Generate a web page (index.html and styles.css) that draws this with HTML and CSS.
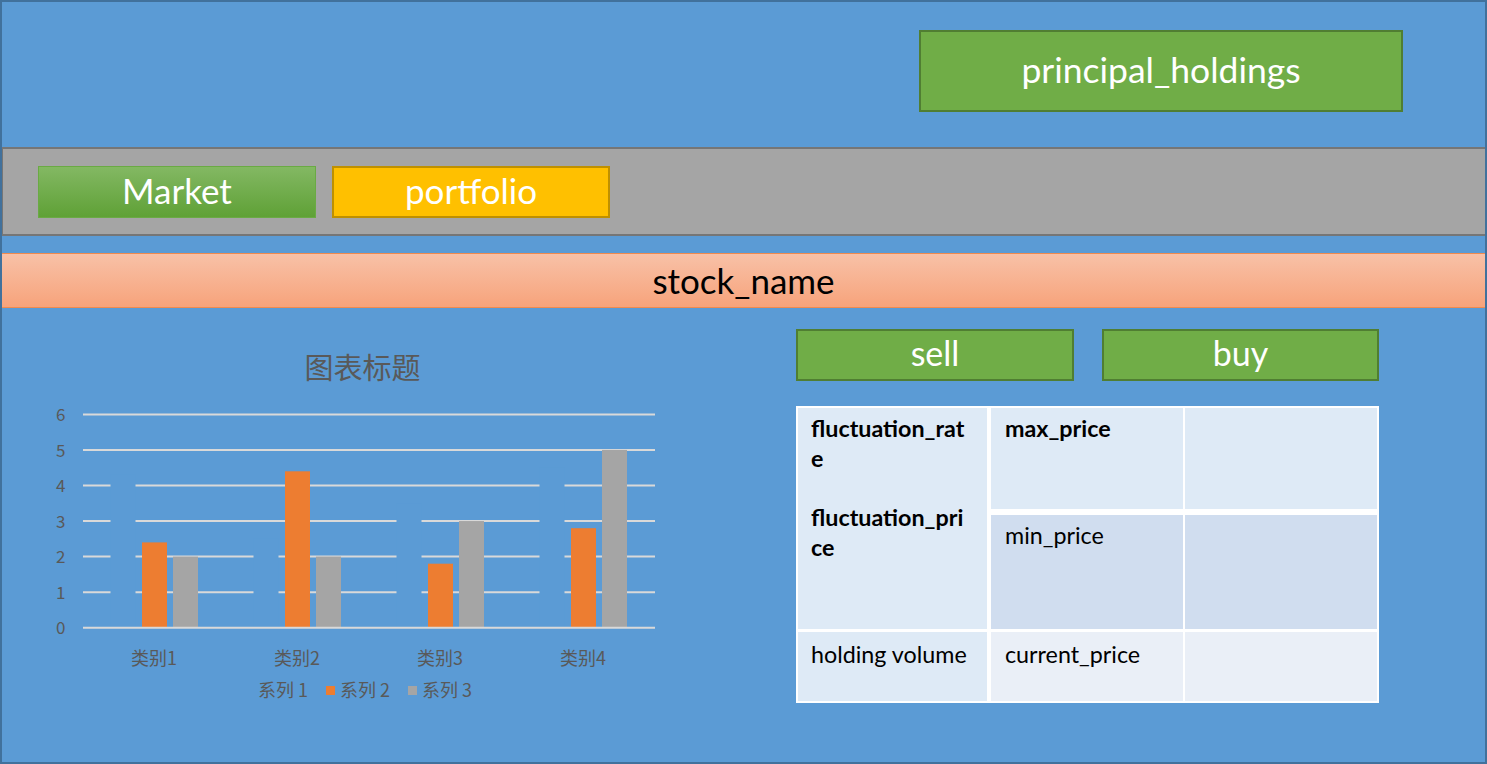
FILE: index.html
```html
<!DOCTYPE html>
<html lang="en">
<head>
<meta charset="utf-8">
<title>Stock</title>
<link rel="stylesheet" href="styles.css">
</head>
<body>
<div class="frame">
  <header class="header">
    <div class="btn btn-principal">principal_holdings</div>
  </header>
  <nav class="nav">
    <div class="btn btn-market">Market</div>
    <div class="btn btn-portfolio">portfolio</div>
  </nav>
  <div class="stock-bar">stock_name</div>
  <main class="content">
    <svg class="chart" width="700" height="452" viewBox="2 308 700 452" xmlns="http://www.w3.org/2000/svg">
      <text class="chart-title" x="362.5" y="379" text-anchor="middle">图表标题</text>
      <g stroke="#D9D9D9" stroke-width="2">
        <line x1="83" x2="655" y1="592.15" y2="592.15"/>
        <line x1="83" x2="655" y1="556.6" y2="556.6"/>
        <line x1="83" x2="655" y1="521.05" y2="521.05"/>
        <line x1="83" x2="655" y1="485.5" y2="485.5"/>
        <line x1="83" x2="655" y1="449.95" y2="449.95"/>
        <line x1="83" x2="655" y1="414.4" y2="414.4"/>
      </g>
      <g fill="#5B9BD5">
        <rect x="110.5" y="474.8" width="25" height="152.9"/>
        <rect x="253.5" y="538.8" width="25" height="88.9"/>
        <rect x="396.5" y="503.3" width="25" height="124.4"/>
        <rect x="539.5" y="467.7" width="25" height="160"/>
      </g>
      <g fill="#ED7D31">
        <rect x="142" y="542.4" width="25" height="85.3"/>
        <rect x="285" y="471.3" width="25" height="156.4"/>
        <rect x="428" y="563.7" width="25" height="64"/>
        <rect x="571" y="528.2" width="25" height="99.5"/>
      </g>
      <g fill="#A5A5A5">
        <rect x="173" y="556.6" width="25" height="71.1"/>
        <rect x="316" y="556.6" width="25" height="71.1"/>
        <rect x="459" y="521.05" width="25" height="106.65"/>
        <rect x="602" y="449.95" width="25" height="177.75"/>
      </g>
      <line x1="83" x2="655" y1="627.7" y2="627.7" stroke="#D9D9D9" stroke-width="2"/>
      <g class="axis-label" text-anchor="end">
        <text x="65.5" y="634">0</text>
        <text x="65.5" y="598.5">1</text>
        <text x="65.5" y="563">2</text>
        <text x="65.5" y="527.5">3</text>
        <text x="65.5" y="492">4</text>
        <text x="65.5" y="456.5">5</text>
        <text x="65.5" y="421">6</text>
      </g>
      <g class="axis-label cat-label" text-anchor="middle">
        <text x="154" y="665">类别1</text>
        <text x="297" y="665">类别2</text>
        <text x="440" y="665">类别3</text>
        <text x="583" y="665">类别4</text>
      </g>
      <rect x="244" y="686" width="9" height="9" fill="#5B9BD5"/>
      <rect x="326" y="686" width="9" height="9" fill="#ED7D31"/>
      <rect x="408" y="686" width="9" height="9" fill="#A5A5A5"/>
      <g class="axis-label cat-label">
        <text x="258" y="697">系列 1</text>
        <text x="340" y="697">系列 2</text>
        <text x="422" y="697">系列 3</text>
      </g>
    </svg>
    <section class="panel">
      <div class="actions">
        <div class="btn btn-trade btn-sell">sell</div>
        <div class="btn btn-trade btn-buy">buy</div>
      </div>
      <div class="info">
        <div class="cell cell-left">
          <p class="strong">fluctuation_rat<br>e</p>
          <p class="strong spaced">fluctuation_pri<br>ce</p>
        </div>
        <div class="cell cell-r1c2"><p class="strong">max_price</p></div>
        <div class="cell cell-r1c3"></div>
        <div class="cell cell-r2c2 dark"><p>min_price</p></div>
        <div class="cell cell-r2c3 dark"></div>
        <div class="cell cell-r3c1"><p>holding volume</p></div>
        <div class="cell cell-r3c2 pale"><p>current_price</p></div>
        <div class="cell cell-r3c3 pale"></div>
      </div>
    </section>
  </main>
</div>
</body>
</html>
```

FILE: styles.css
```css
* { box-sizing: border-box; }
html, body { margin: 0; padding: 0; }
body {
  width: 1487px;
  height: 764px;
  overflow: hidden;
  font-family: "Lato", "Open Sans", sans-serif;
}
.frame {
  width: 1487px;
  height: 764px;
  border: 2px solid #41719C;
  background: #5B9BD5;
  overflow: hidden;
}
.header {
  height: 145px;
  display: flex;
  justify-content: flex-end;
  padding: 28px 82px 0 0;
}
.btn {
  display: flex;
  align-items: center;
  justify-content: center;
  color: #fff;
  line-height: 1;
}
.btn-principal {
  width: 484px;
  height: 82px;
  background: #70AD47;
  border: 2px solid #507E32;
  font-size: 35.5px;
  padding-bottom: 2px;
}
.nav {
  height: 89px;
  background: #A5A5A5;
  border-top: 2px solid #767676;
  border-bottom: 2px solid #767676;
  border-left: 1px solid #767676;
  display: flex;
  gap: 16px;
  padding: 17px 0 0 35px;
}
.btn-market {
  width: 278px;
  height: 52px;
  background: linear-gradient(#83B863, #5FA136);
  border: 1px solid #6AAA44;
  font-size: 35px;
  padding-bottom: 3px;
}
.btn-portfolio {
  width: 278px;
  height: 52px;
  background: #FFC000;
  border: 2px solid #BF9000;
  font-size: 35px;
  padding-bottom: 3px;
}
.stock-bar {
  margin: 17px -2px 0;
  height: 55px;
  background: linear-gradient(#F8C1A7, #F7A37B);
  border: 1px solid #F08A4E;
  display: flex;
  align-items: center;
  justify-content: center;
  font-size: 35px;
  color: #000;
  padding-bottom: 2px;
}
.content {
  display: flex;
  align-items: flex-start;
}
.chart {
  display: block;
  flex: none;
}
.chart-title {
  font-family: "Noto Sans CJK SC", sans-serif;
  font-size: 29px;
  fill: #595959;
}
.axis-label {
  font-family: "Noto Sans CJK SC", sans-serif;
  font-size: 17px;
  fill: #595959;
}
.cat-label {
  font-size: 18px;
}
.panel {
  margin-left: 94px;
  padding-top: 21px;
  width: 583px;
}
.actions {
  display: flex;
  gap: 28px;
}
.btn-trade {
  width: 278px;
  height: 52px;
  background: #70AD47;
  border: 2px solid #507E32;
  font-size: 34px;
  padding-bottom: 4px;
}
.btn-buy { width: 277px; }
.info {
  margin-top: 25px;
  width: 583px;
  height: 297px;
  background: #fff;
  padding: 2px;
  display: grid;
  grid-template-columns: 189px 4px 192px 2px 192px;
  grid-template-rows: 101px 6px 114px 3px 69px;
}
.cell {
  background: #DEEAF6;
  padding: 6px 8px 0 14px;
  font-size: 23.3px;
  line-height: 29.7px;
  color: #000;
}
.cell p { margin: 0; }
.strong { font-weight: 700; }
.spaced { margin-top: 29.7px !important; }
.cell-left { grid-column: 1; grid-row: 1 / 4; padding-left: 13px; }
.cell-r1c2 { grid-column: 3; grid-row: 1; }
.cell-r1c3 { grid-column: 5; grid-row: 1; }
.cell-r2c2 { grid-column: 3; grid-row: 3; padding-top: 6px; }
.cell-r2c3 { grid-column: 5; grid-row: 3; }
.cell-r3c1 { grid-column: 1; grid-row: 5; padding-left: 13px; padding-top: 8px; }
.cell-r3c2 { grid-column: 3; grid-row: 5; padding-top: 8px; }
.cell-r3c3 { grid-column: 5; grid-row: 5; }
.dark { background: #D0DDEF; }
.pale { background: #EAEFF7; }
```
